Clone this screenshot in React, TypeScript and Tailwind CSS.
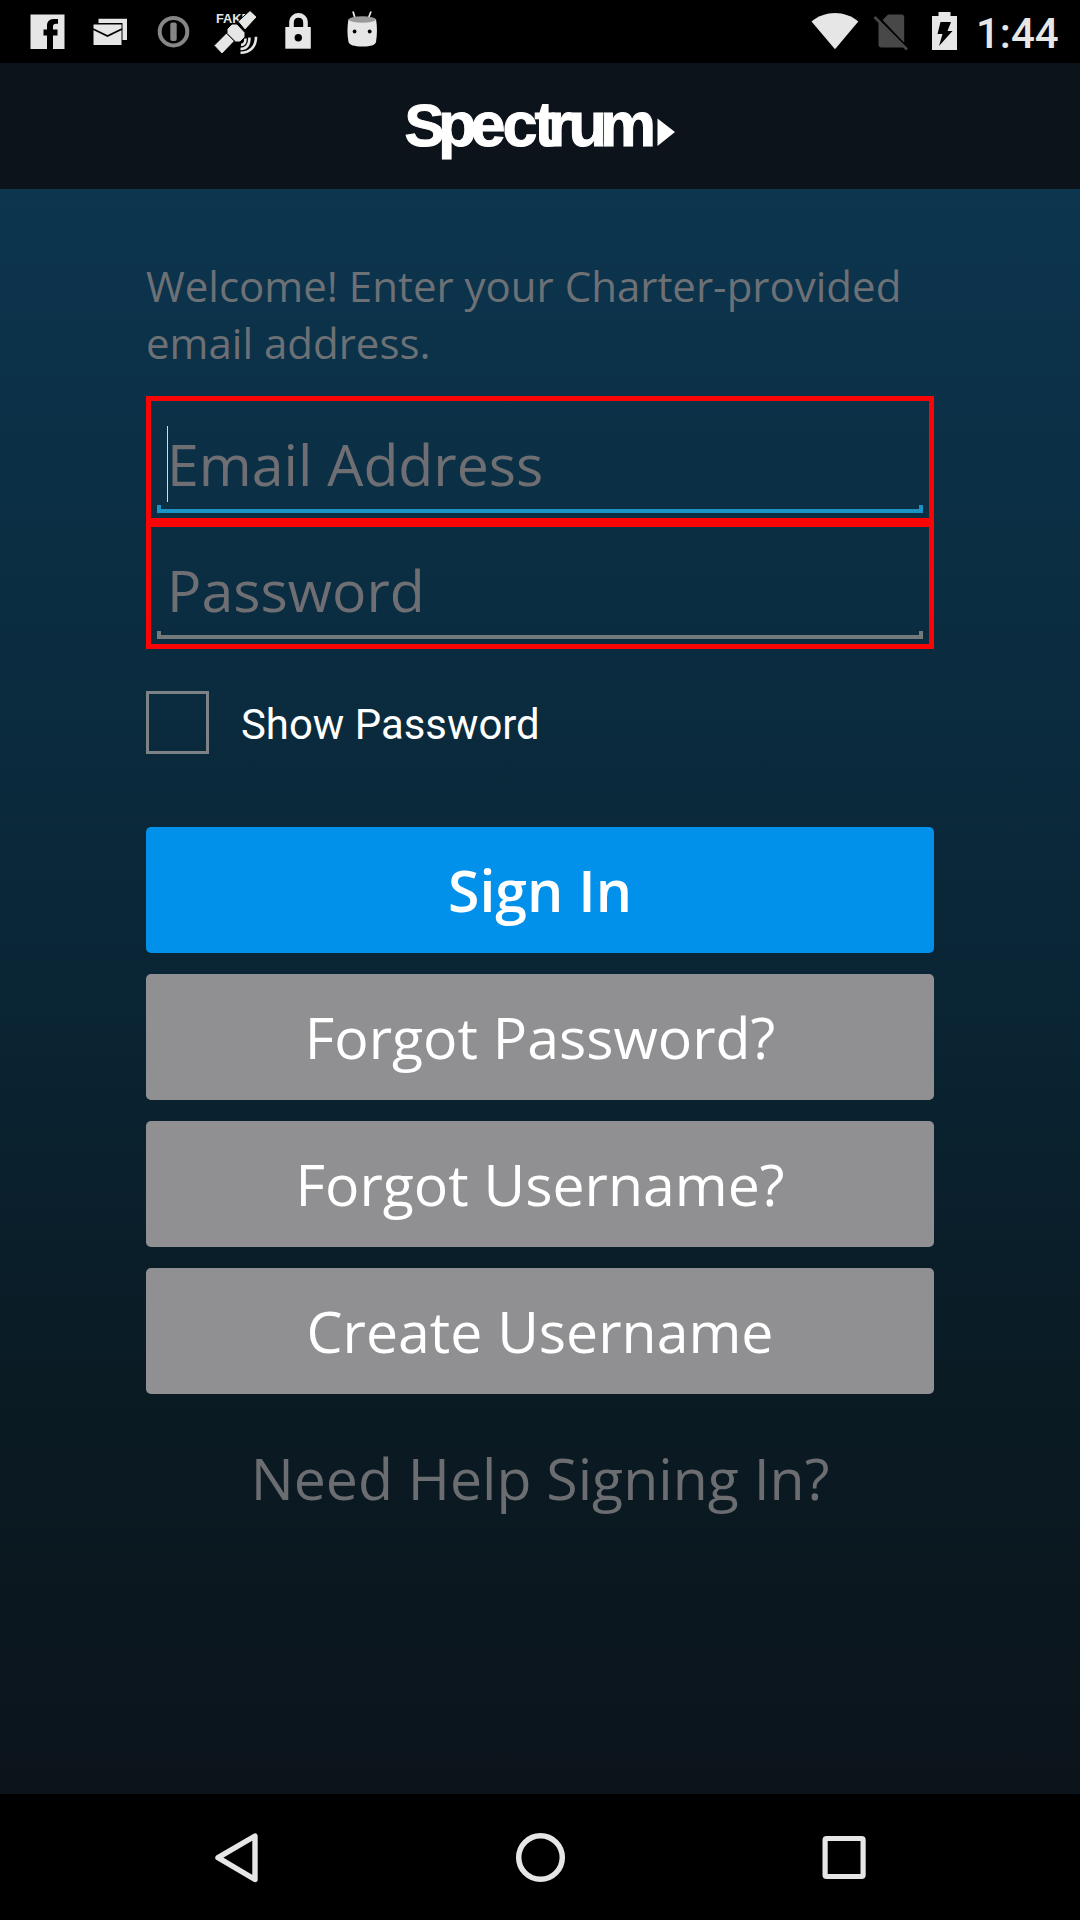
import React from "react";

const FG = "#e6e6e6";

function Glyph({ x, w, children }: { x: number; w: number; children: React.ReactNode }) {
  return (
    <svg width={w} height={63} viewBox={`${x} 0 ${w} 63`} className="block shrink-0">
      {children}
    </svg>
  );
}

function StatusBar() {
  return (
    <div className="flex h-[63px] w-full justify-between bg-black">
      <div className="flex">
        <Glyph x={0} w={80}>
          <path fill={FG} d="M30.5 14.5h34V49H53V35.5h4.5V29.500H53v-3c0-1.800 1-2.700 3-2.700h2V19h-4.500c-4.500 0-6.500 3-6.500 6.500v4h-3.500v6H47V49H30.500z" />
        </Glyph>
        <Glyph x={80} w={64}>
          <path fill={FG} d="M98.500 18.700H127V40h-4.500V23H98.500z" />
          <path fill={FG} d="M93.500 24.500h28V45h-28z" />
          <path stroke="#000" strokeWidth="1.800" fill="none" d="M93 29l14.500 7L122 29" />
        </Glyph>
        <Glyph x={144} w={62}>
          <circle cx="173.500" cy="31.700" r="13.800" fill="none" stroke="#868686" strokeWidth="4" />
          <rect x="170.300" y="22.500" width="6.400" height="18.500" rx="2" fill="#868686" />
        </Glyph>
        <Glyph x={206} w={64}>
          <text x="216" y="23" fill={FG} textLength="34" lengthAdjust="spacingAndGlyphs" className="font-['Liberation_Sans'] text-[13.500px] font-bold">FAKE</text>
          <g stroke="#000" strokeWidth="1">
            <path fill={FG} d="M238 21.500l12-11 7 6.500-12 13z" />
            <path fill={FG} d="M214 45.500l12.500-12.500 8 8-12.500 13z" />
            <path fill={FG} d="M227 29l5-5h5l8 8.500v4.500l-5 5h-4.500l-8.500-8.500z" />
          </g>
          <path stroke={FG} strokeWidth="2.600" fill="none" d="M241 45c3.500 0 4.500-3 4.500-6.500M240.500 49c6.500 0 9-5 9-11.500M240.500 52.700c10.500 0 15.500-7 15.500-16" />
        </Glyph>
        <Glyph x={270} w={60}>
          <path d="M291.500 29v-6.500c0-9.500 14-9.500 14 0V29" stroke={FG} strokeWidth="4.600" fill="none" />
          <rect x="285.300" y="27" width="25.500" height="21.700" fill={FG} />
          <circle cx="298.300" cy="37.800" r="3.700" fill="#000" />
        </Glyph>
        <Glyph x={330} w={62}>
          <path d="M355 18l-2-6.500M368.500 18l2.500-6.500" stroke={FG} strokeWidth="1.800" />
          <path fill={FG} d="M348.500 19c8 3 20 3 27.500 0 1.300 8 1.300 15 0 23-.7 3-5 4.500-13.500 4.500S349.500 45 348.500 42c-1.400-8-1.400-15 0-23z" />
          <ellipse cx="362.300" cy="19.500" rx="13.500" ry="3.300" fill="#9a9a9a" />
          <circle cx="354.600" cy="31.500" r="1.900" fill="#000" />
          <circle cx="369.700" cy="31.500" r="1.900" fill="#000" />
        </Glyph>
      </div>
      <div className="flex">
        <Glyph x={800} w={66}>
          <path fill={FG} d="M811.500 21.500C825 10 845 10 858.300 21.500L835 49.300z" />
        </Glyph>
        <Glyph x={866} w={54}>
          <path fill="#484848" d="M888 14.500h13.500c1.700 0 2.700 1 2.700 2.700v25.500L882.500 20zM878.500 22.500l25 25H881.500c-2 0-3-1-3-3z" />
          <path stroke="#484848" strokeWidth="2.700" d="M874.500 17L907 49.500" />
        </Glyph>
        <Glyph x={920} w={57}>
          <path fill={FG} d="M938.500 12h12v4h6.500v34h-25V16h6.500z" />
          <path fill="#000" d="M940.500 22h10.500l-3.500 9h5L939 46l3.500-12h-5z" />
        </Glyph>
        <Glyph x={977} w={103}>
          <text x="976" y="48" fill={FG} className="font-[Roboto] text-[42px] font-medium">1:44</text>
        </Glyph>
      </div>
    </div>
  );
}

function Logo() {
  return (
    <svg width="300" height="126" viewBox="390 63 300 126" className="block">
      <text
        x="404.500 438 470.500 502.500 534.500 548 568.500 600"
        y="146"
        fill="#fff"
        stroke="#fff"
        strokeWidth="1"
        className="font-['Liberation_Sans'] text-[63px] font-bold"
      >
        <tspan className="text-[60px]">S</tspan>pectrum
      </text>
      <path fill="#fff" d="M657.500 118.500L675 132l-17.500 14z" />
    </svg>
  );
}

function Field({ label, focused }: { label: string; focused?: boolean }) {
  const line = focused ? "border-[#1b93c4]" : "border-[#747a7c]";
  return (
    <div className="relative h-[127px] border-[5px] border-[#f90505] px-[16px] not-first:-mt-px">
      <div className="flex h-[117px] items-center">
        <span className="translate-y-[5px] whitespace-pre text-[57.200px] leading-none text-[#6f6f73]">{label}</span>
      </div>
      {focused && <div className="absolute left-[16px] top-[25px] h-[76px] w-px bg-[#cfdde5]" />}
      <div className={`absolute bottom-[5px] left-[6px] right-[6px] h-[8px] border-x-4 ${line}`} />
      <div className={`absolute bottom-[5px] left-[6px] right-[6px] border-b-4 ${line}`} />
    </div>
  );
}

function Button({ label, primary }: { label: string; primary?: boolean }) {
  return (
    <button
      className={`flex h-[126px] w-full items-center justify-center rounded-[5px] pt-px text-[57.200px] leading-none text-white ${
        primary ? "bg-[#0190ea] font-semibold" : "bg-[#909092]"
      }`}
    >
      {label}
    </button>
  );
}

export default function App() {
  return (
    <div className="flex h-[1920px] w-[1080px] flex-col overflow-hidden bg-black font-['Open_Sans',sans-serif]">
      <StatusBar />
      <header className="flex h-[126px] justify-center bg-[#0c131a]">
        <Logo />
      </header>
      <main className="flex h-[1605px] flex-col bg-[linear-gradient(to_bottom,#0c354e_0%,#0a2636_48%,#0a1b24_74%,#0c141b_100%)] px-[146px] pt-[68px]">
        <p className="h-[139px] whitespace-pre text-[42px] leading-[57px] text-[#6d7075]">
          {"Welcome! Enter your Charter-provided\nemail address."}
        </p>
        <div>
          <Field label="Email Address" focused />
          <Field label="Password" />
        </div>
        <label className="mt-[42px] flex h-[63px] items-center gap-[32px]">
          <span className="h-[63px] w-[63px] border-[3px] border-[#7d8287]" />
          <span className="translate-y-[2px] font-[Roboto] text-[41.900px] leading-none text-white">Show Password</span>
        </label>
        <div className="mt-[73px] flex flex-col gap-[21px]">
          <Button label="Sign In" primary />
          <Button label="Forgot Password?" />
          <Button label="Forgot Username?" />
          <Button label="Create Username" />
          <div className="flex h-[126px] items-center justify-center pt-px text-[57.200px] leading-none text-[#6b6d70]">
            Need Help Signing In?
          </div>
        </div>
      </main>
      <nav className="flex h-[126px] justify-center gap-[244px] pt-[34px]">
        <svg width="60" height="60" viewBox="206 1828 60 60">
          <path d="M255 1836v43.500L218 1857.700z" fill="none" stroke={FG} strokeWidth="5.400" strokeLinejoin="round" />
        </svg>
        <svg width="60" height="60" viewBox="510 1828 60 60">
          <circle cx="540.500" cy="1857.500" r="21.800" fill="none" stroke={FG} strokeWidth="5.500" />
        </svg>
        <svg width="60" height="60" viewBox="814 1828 60 60">
          <rect x="825.100" y="1838.500" width="38" height="38" rx="1.500" fill="none" stroke={FG} strokeWidth="5.200" />
        </svg>
      </nav>
    </div>
  );
}
